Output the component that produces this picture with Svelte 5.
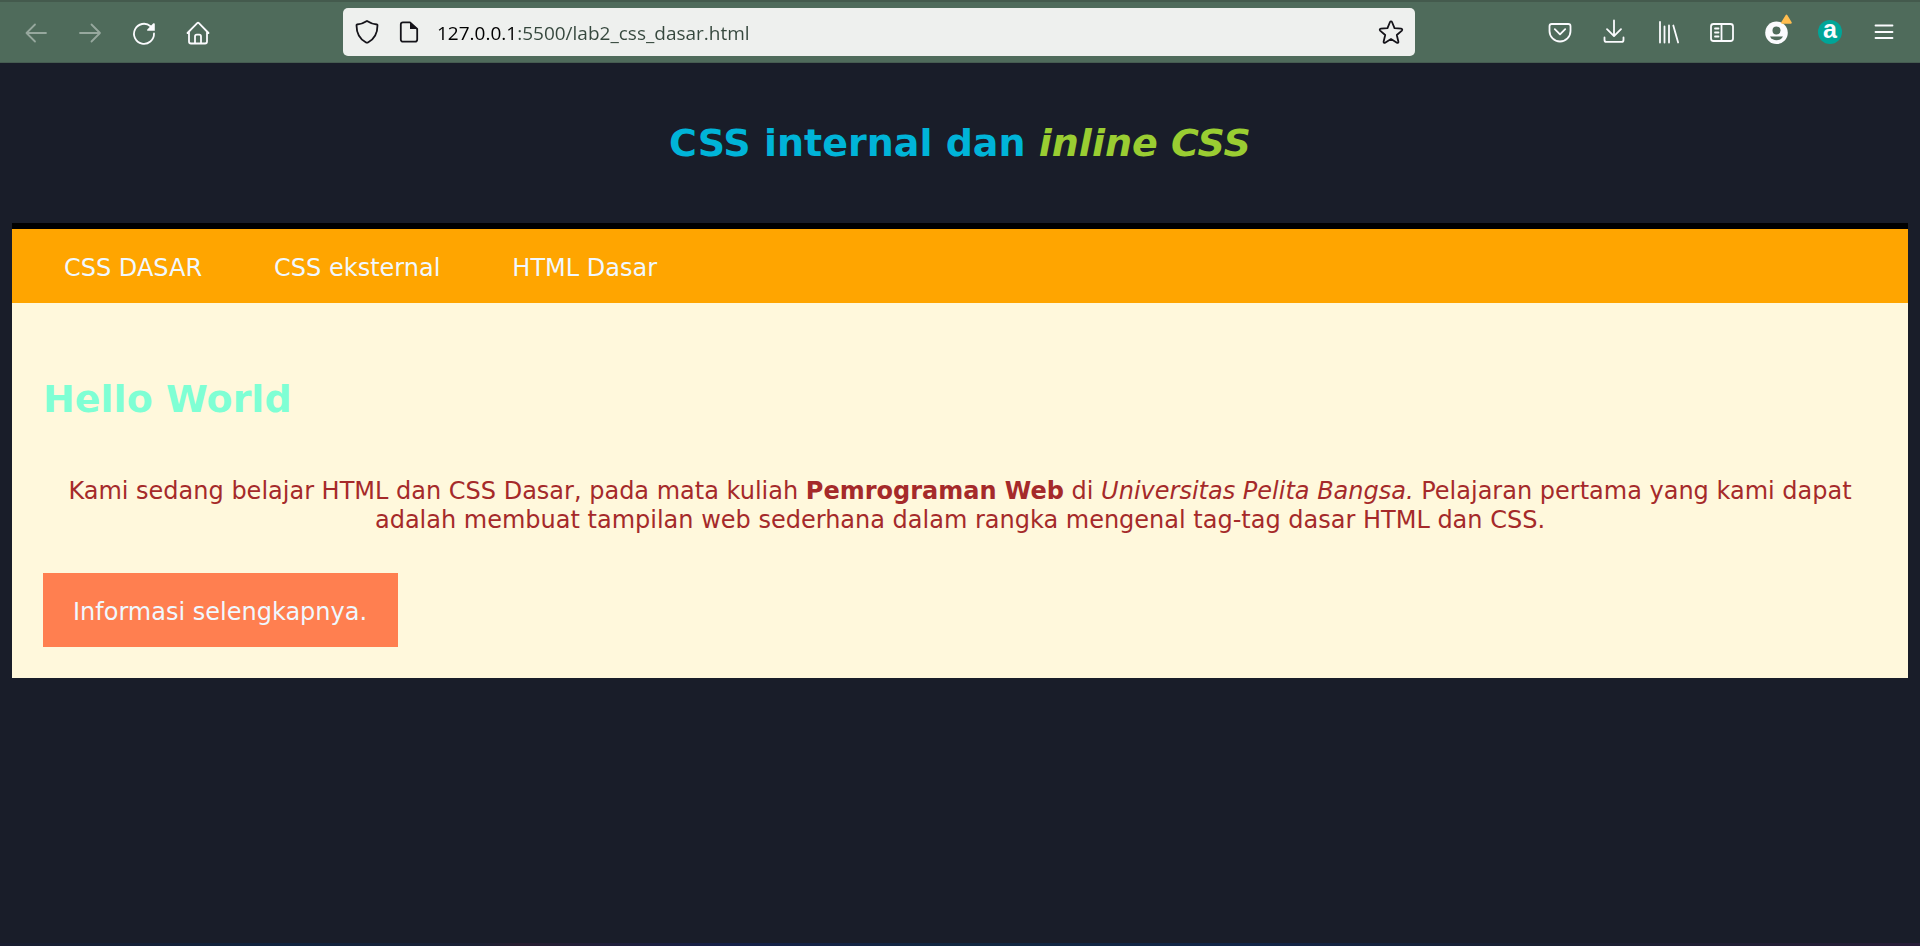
<script>
  let address = $state('127.0.0.1:5500/lab2_css_dasar.html');
  const links = ['CSS DASAR', 'CSS eksternal', 'HTML Dasar'];
</script>

<div class="window">
  <header class="toolbar">
    <div class="group">
      <button class="tool faded" aria-label="Back">
        <svg viewBox="0 -1 28 28"><path d="M24 14H4.500M13 5.500 4.500 14l8.500 8.500" /></svg>
      </button>
      <button class="tool faded" aria-label="Forward">
        <svg viewBox="0 -1 28 28"><path d="M4 14h20M15.500 5.500l8.500 8.500-8.500 8.500" /></svg>
      </button>
      <button class="tool" aria-label="Reload">
        <svg viewBox="0 -1 28 28">
          <path d="M24 14.500a10 10 0 1 1-3.500-7.300" />
          <path class="solid" d="M24.800 5.200v6.600h-6.900c-.8 0-1.100-.8-.6-1.300l5.800-5.900c.6-.6 1.700-.3 1.700.6z" />
        </svg>
      </button>
      <button class="tool" aria-label="Home">
        <svg viewBox="0 -1 28 28">
          <path d="M3.500 14 13.200 4.100a1.200 1.200 0 0 1 1.700 0L24.500 14M5 12.800v9.700a2 2 0 0 0 2 2h14a2 2 0 0 0 2-2v-9.700M11 24.500v-7a1.800 1.800 0 0 1 1.800-1.800h2.400a1.800 1.800 0 0 1 1.800 1.800v7" />
        </svg>
      </button>
    </div>

    <div class="address">
      <button class="mini" aria-label="Tracking protection">
        <svg viewBox="0 0 28 28"><path d="M14 3c3 2 6.500 3.200 10 3.500.3 0 .5.300.5.700 0 6.800-2.500 13.300-9.200 17a2.600 2.600 0 0 1-2.600 0C6 20.500 3.500 14 3.500 7.200c0-.4.200-.7.500-.7 3.500-.300 7-1.500 10-3.500z" /></svg>
      </button>
      <button class="mini" aria-label="Site information">
        <svg viewBox="0 0 28 28">
          <path d="M15 4.300H8a2.200 2.200 0 0 0-2.200 2.200v15A2.200 2.200 0 0 0 8 23.700h12a2.200 2.200 0 0 0 2.200-2.200V11z" />
          <path class="solid" d="M15 4.300V11h7.200z" />
        </svg>
      </button>
      <input type="text" aria-label="Address" bind:value={address} />
      <button class="mini" aria-label="Bookmark this page">
        <svg viewBox="0 0 28 28"><path d="M13 4a1.100 1.100 0 0 1 2 0l2.500 6.200 6.700.5c1 .1 1.400 1.200.7 1.900l-5.100 4.400 1.600 6.700c.2.900-.7 1.500-1.500 1.100L14 21.100l-5.900 3.700c-.8.4-1.700-.2-1.500-1.100L8.200 17l-5.100-4.400c-.7-.7-.300-1.800.7-1.900l6.700-.5z" /></svg>
      </button>
    </div>

    <div class="group">
      <button class="tool" aria-label="Save to Pocket">
        <svg viewBox="0 0 28 28"><path d="M5.800 6h16.400a2.300 2.300 0 0 1 2.300 2.300v4.700a10.500 10.500 0 0 1-21 0V8.300A2.300 2.300 0 0 1 5.800 6zM8.800 11.200l5.200 5.200 5.200-5.200" /></svg>
      </button>
      <button class="tool" aria-label="Downloads">
        <svg viewBox="0 0 28 28"><path d="M14 2.500v15.200M7 11.200l7 6.900 7-6.900M4.500 19.500v2.400a2 2 0 0 0 2 2h15a2 2 0 0 0 2-2v-2.400" /></svg>
      </button>
      <button class="tool" aria-label="Library">
        <svg viewBox="0 0 28 28"><path d="M6 4v20.500M10.500 8.500v16M15 7.500v17M19.300 7.500l4.800 17" /></svg>
      </button>
      <button class="tool" aria-label="Sidebars">
        <svg viewBox="0 0 28 28"><rect x="3" y="6" width="22" height="17" rx="2.500" /><path d="M13.500 6v17M7 10.500h3.500M7 14.500h3.500M7 18.500h3.500" /></svg>
      </button>
      <button class="tool" aria-label="Account">
        <svg viewBox="0 0 28 28">
          <circle class="solid" cx="14.500" cy="14.700" r="11.300" />
          <circle class="cut" cx="14.500" cy="12.500" r="4" />
          <path class="cut" d="M8 18.500h13c-2.500 5-10.500 5-13 0z" />
          <path class="alert" d="m24.500-2.600 4.400 7.400H20z" />
        </svg>
      </button>
      <button class="tool" aria-label="Extension"><span class="badge">a</span></button>
      <button class="tool" aria-label="Menu">
        <svg viewBox="0 0 28 28"><path d="M5.500 7.500h17M5.500 14h17M5.500 20h17" /></svg>
      </button>
    </div>
  </header>

  <main>
    <h1>CSS internal dan <i>inline CSS</i></h1>
    <nav>
      {#each links as link}
        <a href="#top">{link}</a>
      {/each}
    </nav>
    <section>
      <h2>Hello World</h2>
      <p>
        Kami sedang belajar HTML dan CSS Dasar, pada mata kuliah <b>Pemrograman Web</b> di
        <i>Universitas Pelita Bangsa.</i> Pelajaran pertama yang kami dapat adalah membuat tampilan
        web sederhana dalam rangka mengenal tag-tag dasar HTML dan CSS.
      </p>
      <a class="more" href="#more">Informasi selengkapnya.</a>
    </section>
  </main>
  <div class="edge"></div>
</div>

<style>
  :global(body) {
    background: #191d29;
  }
  .window {
    display: flex;
    flex-direction: column;
    min-height: 100vh;
    font: 24px/29px Verdana, 'DejaVu Sans', sans-serif;
  }
  .toolbar {
    display: flex;
    align-items: center;
    height: 60px;
    padding: 0 9px;
    background: #4f6b5b;
    border-top: 2px solid #445a4d;
    border-bottom: 1px solid #465c51;
  }
  .group {
    display: flex;
  }
  button {
    display: flex;
    align-items: center;
    justify-content: center;
    padding: 0;
    border: 0;
    background: none;
    color: #fbfbfe;
  }
  .tool {
    width: 54px;
    height: 48px;
  }
  .faded {
    color: #97a89e;
  }
  svg {
    width: 28px;
    height: 28px;
    overflow: visible;
    fill: none;
    stroke: currentColor;
    stroke-width: 1.8;
    stroke-linecap: round;
    stroke-linejoin: round;
  }
  .solid {
    fill: currentColor;
    stroke: none;
  }
  .cut {
    fill: #4f6b5b;
    stroke: none;
  }
  .alert {
    fill: #ffbd4f;
    stroke: #ffbd4f;
  }
  .badge {
    width: 24px;
    height: 24px;
    border-radius: 50%;
    background: #00a598;
    font: bold 25px/19px 'Liberation Sans', sans-serif;
  }
  .address {
    display: flex;
    flex: 1;
    align-items: center;
    height: 48px;
    margin: 0 118px;
    padding: 0 3px;
    border-radius: 5px;
    background: #eef0ee;
  }
  .mini {
    width: 42px;
    height: 42px;
    color: #15141a;
  }
  input {
    flex: 1;
    min-width: 0;
    height: 42px;
    box-sizing: border-box;
    margin: 0;
    padding: 2px 7px 0;
    border: 0;
    outline: 0;
    background: linear-gradient(90deg, #000 87px, #35473d 87px);
    background-clip: text;
    color: transparent;
    font: 19px/40px 'Open Sans', sans-serif;
  }
  main {
    flex: 1;
    padding: 0 12px;
  }
  h1,
  h2 {
    font-size: 38px;
    line-height: 44px;
  }
  h1 {
    margin: 0;
    padding: 58px 0;
    color: #00b4d8;
    text-align: center;
  }
  h1 i {
    color: #9acd32;
  }
  nav {
    display: flex;
    gap: 24px;
    padding: 0 28px;
    border-top: 6px solid #000;
    background: #ffa500;
  }
  a {
    color: #f0f8ff;
    text-decoration: none;
  }
  nav a {
    padding: 25px 24px 20px;
  }
  section {
    padding: 74px 31px 31px;
    background: #fff8dc;
  }
  h2 {
    margin: 0 0 56px;
    color: #7fffd4;
  }
  p {
    margin: 0 0 38px;
    color: #a52a2a;
    text-align: center;
  }
  .more {
    display: inline-block;
    padding: 25px 31px 20px 30px;
    background: #ff7f50;
    vertical-align: top;
  }
  .edge {
    height: 3px;
    background: linear-gradient(90deg, #191d2f, #10233f 15%, #1b2033 25%, #271d30 27%, #152048 38%, #122740 50%, #122548 65%, #191f30 80%, #271d38);
  }
</style>
